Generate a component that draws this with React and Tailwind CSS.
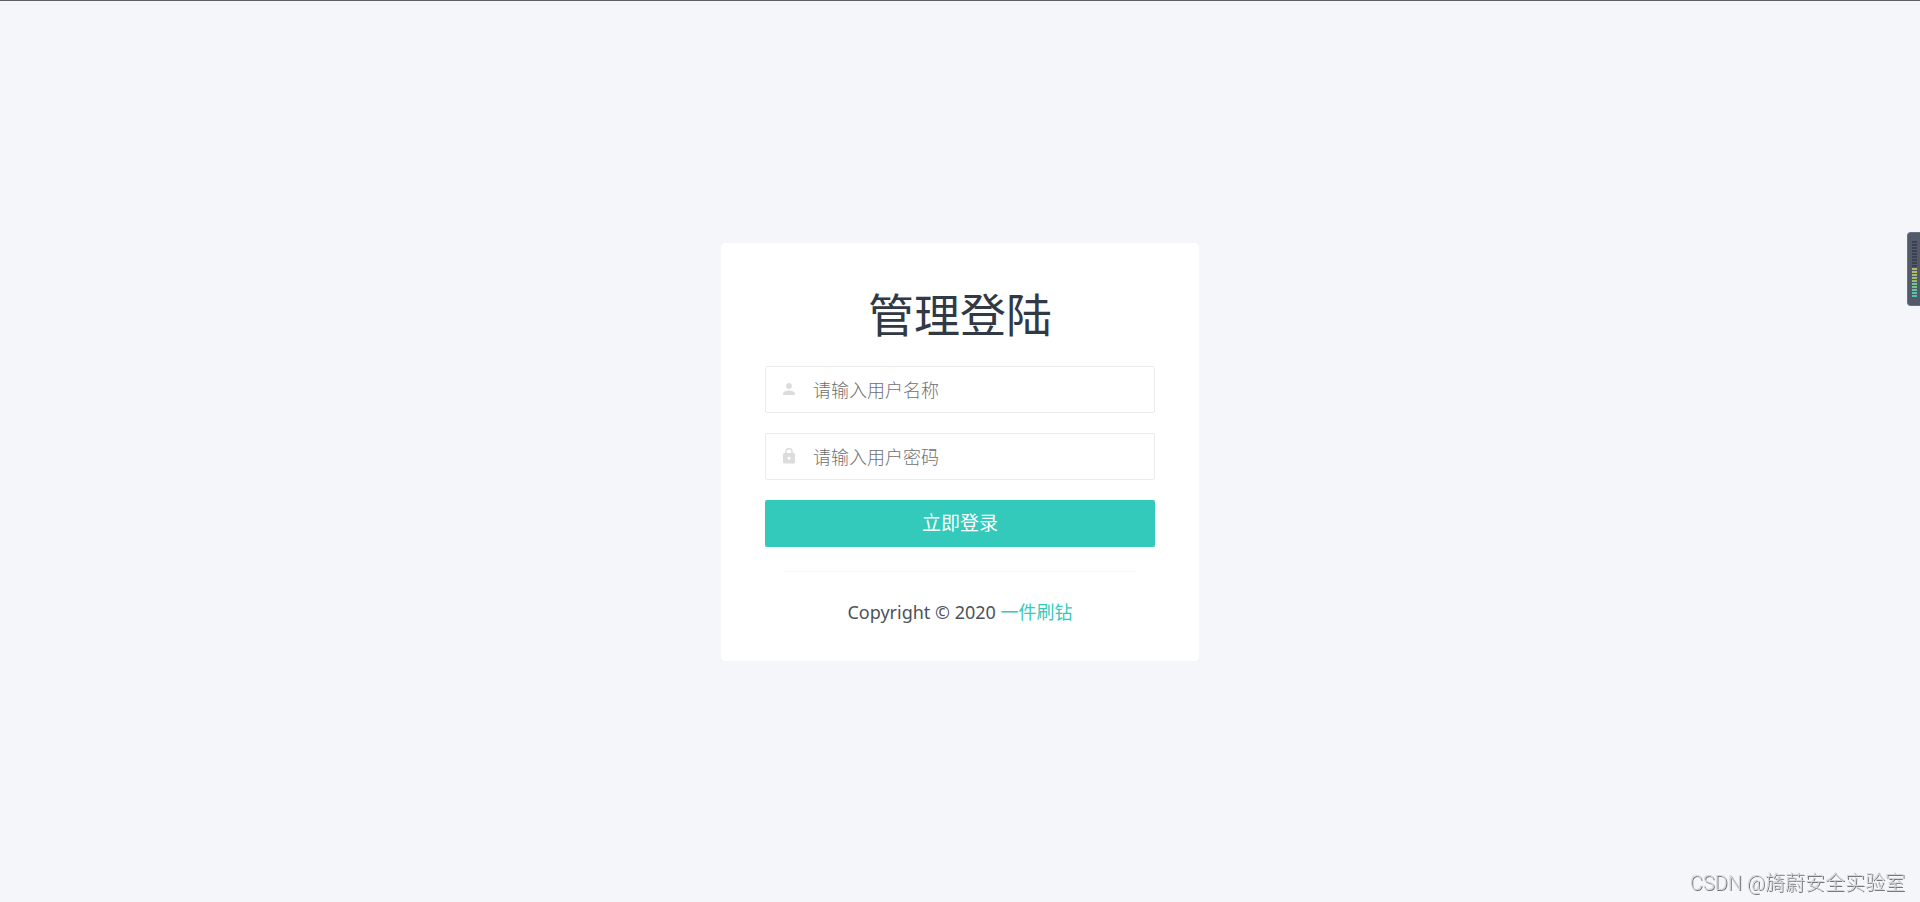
import { MdLock, MdPerson } from 'react-icons/md'
import clsx from 'clsx'

const fields = [
  { id: 'username', type: 'text', label: '请输入用户名称', icon: MdPerson },
  { id: 'password', type: 'password', label: '请输入用户密码', icon: MdLock },
]

const levels = [
  'bg-[#3c4252]',
  'bg-[#3c4252]',
  'bg-[#3c4252]',
  'bg-[#3c4252]',
  'bg-[#3c4252]',
  'bg-[#3c4252]',
  'bg-[#3c4252]',
  'bg-[#3c4252]',
  'bg-[#3c4252]',
  'bg-[#b9ba66]',
  'bg-[#b2bb69]',
  'bg-[#a8bc6e]',
  'bg-[#9cbe74]',
  'bg-[#8dc07d]',
  'bg-[#7ec287]',
  'bg-[#70c392]',
  'bg-[#62c49d]',
  'bg-[#56c4aa]',
  'bg-[#4bc4b6]',
]

function Field({ id, type, label, icon: Icon }) {
  return (
    <div className="relative">
      <Icon className="absolute left-[15px] top-3.5 size-[18px] text-[#dcdcdc]" />
      <input
        id={id}
        name={id}
        type={type}
        placeholder={label}
        aria-label={label}
        className="block h-[47px] w-full rounded-[2px] border border-[#ebebeb] bg-white pl-[47px] pr-3 pt-0.5 text-[18px] font-light text-[#4d5259] outline-none placeholder:text-[#707070] focus:border-[#33cabb]"
      />
    </div>
  )
}

function LevelMeter() {
  return (
    <div className="fixed right-0 top-[232px] flex h-[74px] w-[13px] flex-col items-end gap-px rounded-l-[4px] border border-r-0 border-[#6b7080] bg-[#535b6b] pr-[3px] pt-2">
      {levels.map((color, index) => (
        <span key={index} className={clsx('h-0.5 w-[5px] shrink-0', color)} />
      ))}
    </div>
  )
}

export default function App() {
  return (
    <div className="flex min-h-screen items-center justify-center border-t border-[#5f5d66] bg-[#f5f6fa] font-['Noto_Sans','Noto_Sans_CJK_SC',sans-serif] text-[#4d5259]">
      <main className="w-full max-w-[478px] rounded-[5px] bg-white px-11 pb-[33px] pt-[43px]">
        <h1 className="mb-[23px] text-center text-[46px] leading-[57px] text-[#313944]">管理登陆</h1>

        <form className="flex flex-col gap-5" onSubmit={(e) => e.preventDefault()}>
          {fields.map((field) => (
            <Field key={field.id} {...field} />
          ))}
          <button
            type="submit"
            className="h-[47px] w-full cursor-pointer rounded-[2px] bg-[#33cabb] text-[19px] text-white hover:bg-[#52d3c7]"
          >
            立即登录
          </button>
        </form>

        <hr className="mx-[18px] my-6 border-[#f5f6f7]" />

        <footer className="text-center text-[18px] leading-8">
          Copyright © 2020{' '}
          <a href="#" className="text-[#33cabb]">
            一件刷钻
          </a>
        </footer>
      </main>

      <LevelMeter />

      <p className="fixed bottom-1 right-[15px] font-['Roboto','Noto_Sans_CJK_SC',sans-serif] text-[20px] font-light leading-[30px] text-[#d4d5d9] [text-shadow:1px_1px_0_#77787c]">
        CSDN @旖蔚安全实验室
      </p>
    </div>
  )
}
